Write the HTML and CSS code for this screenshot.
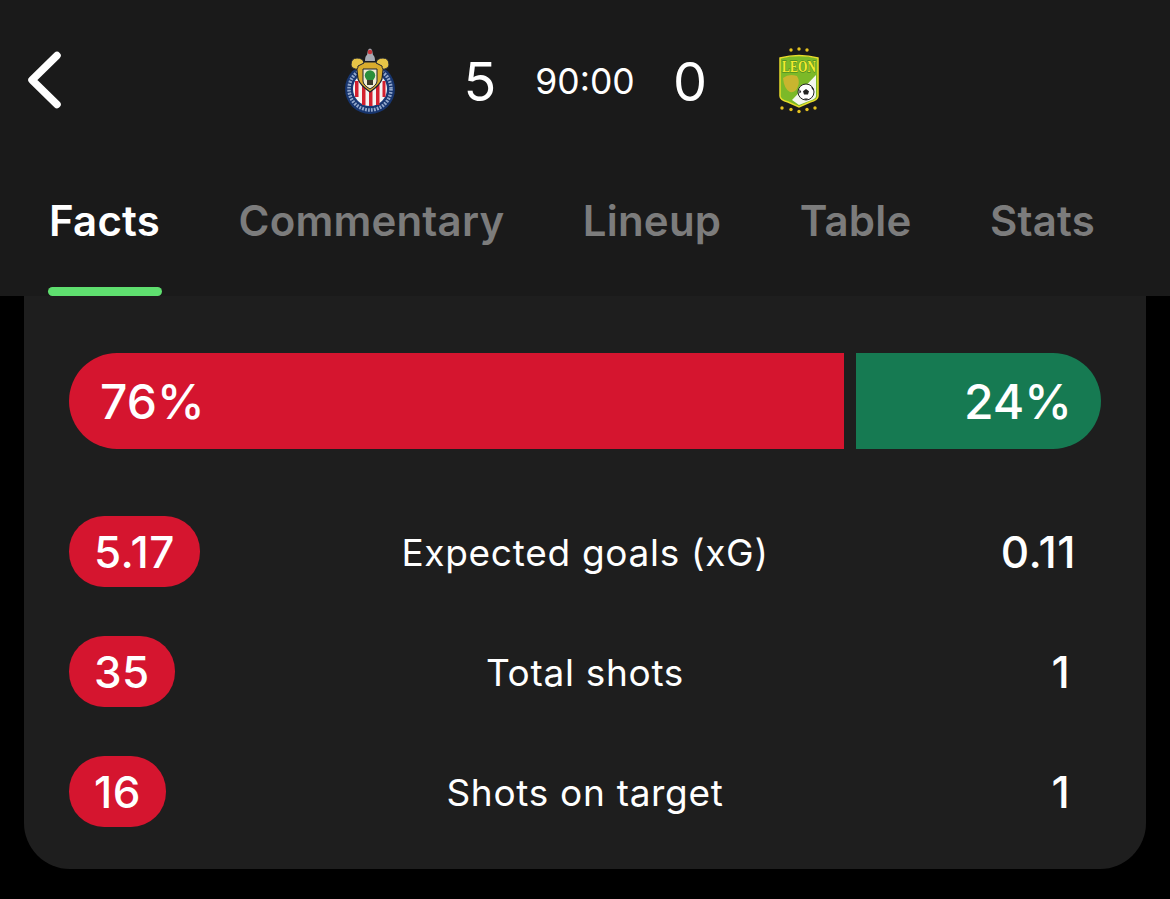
FILE: index.html
```html
<!DOCTYPE html>
<html lang="en">
<head>
<meta charset="utf-8">
<title>Match stats</title>
<link rel="stylesheet" href="styles.css">
</head>
<body>
<header class="header">
  <div class="score-row">
    <svg class="back" viewBox="0 0 36 60" width="36" height="60"><path d="M31 5.500 L6 30 L31 54.500" fill="none" stroke="#fff" stroke-width="7.500" stroke-linecap="round" stroke-linejoin="round"/></svg>
    <div class="match">
      <svg class="crest" viewBox="0 0 54 70" width="54" height="70">
        <circle cx="27" cy="44" r="25" fill="#17356e"/>
        <circle cx="27" cy="44" r="21" fill="none" stroke="#93a8cc" stroke-width="3.500" stroke-dasharray="1.800 1.200"/>
        <circle cx="27" cy="44" r="18.500" fill="#1a3a78"/>
        <circle cx="27" cy="44" r="17" fill="#f4f4f4"/>
        <path d="M12 36h3.500v16h-3.500zM19 36h3.500v24h-3.500zM26 36h3.500v25h-3.500zM33 36h3.500v24h-3.500zM39.500 36h3v16h-3z" fill="#d3202f"/>
        <path d="M13 17 h28 l-2 17 q-2 6 -12 13 q-10 -7 -12 -13 z" fill="#d9ac2d" stroke="#1d2230" stroke-width="1.200"/>
        <path d="M8 20q0-7 6-7 6 0 7 5l-6 3q0 4-3 3-4-1-4-4zM46 20q0-7-6-7-6 0-7 5l6 3q0 4 3 3 4-1 4-4z" fill="#e6c447" stroke="#1d2230" stroke-width="1"/>
        <path d="M20 24h14v12q0 4-7 8-7-4-7-8z" fill="#f0ecd2" stroke="#1d2230" stroke-width="1"/>
        <circle cx="27" cy="30.500" r="5.200" fill="#2b8f3b"/>
        <rect x="24" y="35" width="6" height="5" fill="#3c3a2a"/>
        <path d="M22 16q0-5 2-6l1-5q2-3 4 0l1 5q2 1 2 6z" fill="#a7abb4"/>
        <circle cx="27" cy="7" r="2.300" fill="#c7383e"/>
      </svg>
      <span class="goals goals-home">5</span>
      <span class="clock">90:00</span>
      <span class="goals">0</span>
      <svg class="crest crest-leon" viewBox="0 0 44 68" width="44" height="68">
        <g fill="#e6c31f">
          <circle cx="14" cy="4" r="1.700"/><circle cx="22" cy="3" r="1.700"/><circle cx="30" cy="4" r="1.700"/>
          <circle cx="5" cy="62" r="1.700"/><circle cx="14" cy="63.500" r="1.700"/><circle cx="22" cy="65.500" r="1.700"/><circle cx="30" cy="63.500" r="1.700"/><circle cx="38" cy="62" r="1.700"/>
        </g>
        <path d="M3 12 Q22 7 41 12 V50 Q41 54 33 56 L22 61 L11 56 Q3 54 3 50 Z" fill="#7cb928" stroke="#e8dc2a" stroke-width="1.500"/>
        <text class="leon-text" transform="translate(22 26) scale(.75 1)" text-anchor="middle">LEON</text>
        <path d="M39 29 V50 Q39 53 32 55 L22 59 L15 54 Z" fill="#f4f7ee"/>
        <circle cx="29" cy="46" r="8" fill="#fff" stroke="#222" stroke-width="1"/>
        <path d="M29 43l3 2.200-1 3.300h-4l-1-3.300zM22.500 43l1.800 3-2 1.500zM34 40.500l1.500 3.500.8-1.500zM27 52.500h4l-2 1.400z" fill="#222"/>
        <path d="M6 32q6-5 14-2 3 5 1 10-2 7-8 6-6-3-7-14z" fill="#c9b52f"/>
      </svg>
    </div>
  </div>
  <nav class="tabs">
    <a class="tab tab-active">Facts</a>
    <a class="tab">Commentary</a>
    <a class="tab">Lineup</a>
    <a class="tab">Table</a>
    <a class="tab">Stats</a>
  </nav>
</header>
<main class="card">
  <div class="possession">
    <div class="share share-home">76%</div>
    <div class="share share-away">24%</div>
  </div>
  <div class="stat">
    <span class="value value-home">5.17</span>
    <span class="label">Expected goals (xG)</span>
    <span class="value value-away">0.11</span>
  </div>
  <div class="stat">
    <span class="value value-home">35</span>
    <span class="label">Total shots</span>
    <span class="value value-away">1</span>
  </div>
  <div class="stat">
    <span class="value value-home">16</span>
    <span class="label">Shots on target</span>
    <span class="value value-away">1</span>
  </div>
</main>
</body>
</html>
```
FILE: styles.css
```css
* { box-sizing: border-box; }
html, body { margin: 0; background: #000; }
body {
  width: 1170px;
  height: 899px;
  overflow: hidden;
  color: #fff;
  font-family: Inter, "Liberation Sans", sans-serif;
}
.header {
  height: 296px;
  background: #1a1a1a;
  display: flex;
  flex-direction: column;
}
.score-row {
  display: flex;
  align-items: center;
  height: 160px;
  padding-left: 26px;
}
.back { flex: none; }
.match {
  display: flex;
  align-items: center;
  margin-left: 281px;
}
.crest { flex: none; }
.goals {
  font-size: 54px;
  font-weight: 400;
  width: 60px;
  padding-top: 2px;
  text-align: center;
}
.goals-home { margin-left: 53px; }
.clock {
  font-size: 35.5px;
  width: 130px;
  margin: 0 10px;
  padding-top: 2px;
  text-align: center;
}
.crest-leon { margin-left: 57px; }
.leon-text {
  font-family: "Liberation Serif", serif;
  font-weight: 700;
  font-size: 16px;
  fill: #f2ea2e;
  stroke: #3d7d1e;
  stroke-width: 0.8px;
  paint-order: stroke;
}
.tabs {
  display: flex;
  justify-content: space-between;
  padding: 0 73px 0 47px;
  flex: 1;
}
.tab {
  height: 136px;
  padding: 35px 2px 0;
  font-size: 42px;
  font-weight: 600;
  letter-spacing: 0.2px;
  color: #7c7c7c;
  position: relative;
}
.tab-active { color: #fff; }
.tab-active::after {
  content: "";
  position: absolute;
  left: 1px;
  right: 0;
  bottom: 0;
  height: 9px;
  background: #5fdf6f;
  border-radius: 5px;
}
.card {
  width: 1122px;
  height: 573px;
  margin-left: 24px;
  padding: 57px 45px 0;
  background: #1e1e1e;
  border-radius: 0 0 46px 46px;
}
.possession {
  display: flex;
  gap: 12px;
  height: 96px;
  margin-bottom: 67px;
}
.share {
  display: flex;
  align-items: center;
  font-size: 48px;
  font-weight: 500;
  padding: 0 31px;
}
.share-home {
  flex: none;
  width: 775px;
  background: #d5152f;
  border-radius: 48px 0 0 48px;
}
.share-away {
  flex: 1;
  justify-content: flex-end;
  padding-right: 29px;
  background: #167a52;
  border-radius: 0 48px 48px 0;
}
.stat {
  display: grid;
  grid-template-columns: 1fr auto 1fr;
  align-items: center;
  height: 71px;
  margin-bottom: 49px;
}
.value {
  height: 71px;
  min-width: 80px;
  padding: 0 25px;
  display: flex;
  align-items: center;
  justify-content: center;
  font-size: 44px;
  font-weight: 500;
  letter-spacing: 0.5px;
}
.value-home {
  justify-self: start;
  background: #d5152f;
  border-radius: 35px;
}
.value-away { justify-self: end; }
.label {
  font-size: 37px;
  font-weight: 400;
  letter-spacing: 0.7px;
  padding-top: 1px;
  text-align: center;
}
```
